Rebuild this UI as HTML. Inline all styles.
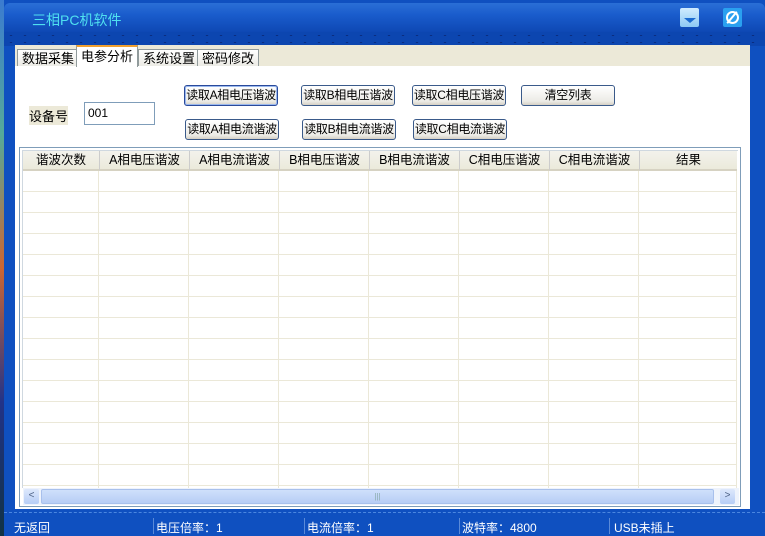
<!DOCTYPE html><html><head><style>
*{margin:0;padding:0;box-sizing:border-box}
body{width:765px;height:536px;overflow:hidden;background:#1a5fb0;font-family:"Liberation Sans","Noto Sans CJK SC",sans-serif;font-size:12px;position:relative}
.abs{position:absolute}
#left{left:0;top:0;width:4px;height:536px;background:linear-gradient(#3b7bd0,#5a9,#c63,#238,#134)}
#win{left:4px;top:0;width:761px;height:536px;background:#0f50c0}
#title{left:4px;top:3px;width:761px;height:29px;background:linear-gradient(#2a6fd6,#1a5ccc 40%,#0e48b4);border-radius:6px 6px 0 0}
#title span{position:absolute;left:28px;top:7px;color:#4fe0f0;font-size:14px;letter-spacing:0}
#dots{left:4px;top:32px;width:761px;height:14px;background:#0c46b0;background-image:radial-gradient(#0a2d80 1px,transparent 1.5px);background-size:14px 7px}
#panel{left:15px;top:45px;width:735px;height:464px;background:#fff}
#tabs{left:15px;top:45px;width:735px;height:21px;background:#ece9d8}
.tab{position:absolute;top:4px;height:17px;border:1px solid #919b9c;border-bottom:none;background:linear-gradient(#fff,#ecebe5);font-size:13px;padding:1px 4px 0;color:#000;line-height:15px;white-space:nowrap}
.btn{position:absolute;height:21px;border:1px solid #3a5a8a;border-radius:3px;background:linear-gradient(#fff,#ecebe6 80%,#d6d0c5);font-size:12px;line-height:19px;text-align:center;color:#000;white-space:nowrap;overflow:hidden;letter-spacing:-0.3px}
#grid{left:19px;top:147px;width:722px;height:360px;border:1px solid #7f9db9;background:#fff}
.hd{position:absolute;top:3px;height:20px;background:linear-gradient(#f3f2ec,#ebeadb);border-bottom:2px solid #d6d2c2;font-size:12.5px;line-height:18px;text-align:center;white-space:nowrap}
#status{left:4px;top:512px;width:761px;height:24px;background:#0f50c0;border-top:1px dashed #4a86e0}
#status span{position:absolute;top:6px;color:#fff;font-size:12px}
.sep{position:absolute;top:5px;width:1px;height:16px;background:#5a8ad8}
</style></head><body>
<div class="abs" id="left"></div>
<div class="abs" id="win"></div>
<div class="abs" id="title"><span>三相PC机软件</span>
<div style="position:absolute;left:676px;top:5px;width:19px;height:19px;background:linear-gradient(#d0ecff,#8cc8f4);border-radius:2px"><div style="position:absolute;left:4px;top:10px;border-left:6px solid transparent;border-right:6px solid transparent;border-top:5px solid #1a6ad0"></div></div>
<div style="position:absolute;left:719px;top:5px;width:19px;height:19px;background:#2aa0f0;border-radius:2px"><div style="position:absolute;left:3px;top:3px;width:13px;height:13px;border:2px solid #fff;border-radius:50%"></div><div style="position:absolute;left:8px;top:2px;width:2px;height:15px;background:#fff;transform:rotate(40deg)"></div></div>
</div>
<div class="abs" id="dots"></div>
<div class="abs" id="panel"></div>
<div class="abs" id="tabs">
<div class="tab" style="left:2px">数据采集</div>
<div class="tab" style="left:61px;top:0;height:22px;background:#fff;border-top:2px solid #f0a030;padding-top:2px">电参分析</div>
<div class="tab" style="left:123px">系统设置</div>
<div class="tab" style="left:182px">密码修改</div>
</div>
<div class="abs" style="left:29px;top:106px;font-size:13px;background:#ece9d8">设备号</div>
<div class="abs" style="left:84px;top:102px;width:71px;height:23px;border:1px solid #7f9db9;background:#fff;padding:3px 3px;font-size:12px">001</div>
<div class="btn" style="left:184px;top:85px;width:94px;border-color:#2a4a9a;box-shadow:inset 0 0 0 1px #9ab8ee">读取A相电压谐波</div>
<div class="btn" style="left:301px;top:85px;width:94px">读取B相电压谐波</div>
<div class="btn" style="left:412px;top:85px;width:94px">读取C相电压谐波</div>
<div class="btn" style="left:521px;top:85px;width:94px">清空列表</div>
<div class="btn" style="left:185px;top:119px;width:94px">读取A相电流谐波</div>
<div class="btn" style="left:302px;top:119px;width:94px">读取B相电流谐波</div>
<div class="btn" style="left:413px;top:119px;width:94px">读取C相电流谐波</div>
<div class="abs" id="grid">
<svg width="722" height="360" style="position:absolute;left:0;top:0">
<g stroke="#ebe8d8" stroke-width="1">
<line x1="3" x2="717" y1="43.5" y2="43.5"/><line x1="3" x2="717" y1="64.5" y2="64.5"/><line x1="3" x2="717" y1="85.5" y2="85.5"/><line x1="3" x2="717" y1="106.5" y2="106.5"/><line x1="3" x2="717" y1="127.5" y2="127.5"/><line x1="3" x2="717" y1="148.5" y2="148.5"/><line x1="3" x2="717" y1="169.5" y2="169.5"/><line x1="3" x2="717" y1="190.5" y2="190.5"/><line x1="3" x2="717" y1="211.5" y2="211.5"/><line x1="3" x2="717" y1="232.5" y2="232.5"/><line x1="3" x2="717" y1="253.5" y2="253.5"/><line x1="3" x2="717" y1="274.5" y2="274.5"/><line x1="3" x2="717" y1="295.5" y2="295.5"/><line x1="3" x2="717" y1="316.5" y2="316.5"/><line x1="3" x2="717" y1="337.5" y2="337.5"/>
<line x1="78.5" x2="78.5" y1="22" y2="340"/><line x1="168.5" x2="168.5" y1="22" y2="340"/><line x1="258.5" x2="258.5" y1="22" y2="340"/><line x1="348.5" x2="348.5" y1="22" y2="340"/><line x1="438.5" x2="438.5" y1="22" y2="340"/><line x1="528.5" x2="528.5" y1="22" y2="340"/><line x1="618.5" x2="618.5" y1="22" y2="340"/><line x1="716.5" x2="716.5" y1="3" y2="340"/>
</g></svg>
<div style="position:absolute;left:2px;top:2px;width:716px;height:338px;border:1px solid #cfd8e0;border-right:none;border-bottom:none"></div>
<div class="hd" style="left:3px;width:76px">谐波次数</div>
<div class="hd" style="left:79px;width:90px;border-left:1px solid #ccc">A相电压谐波</div>
<div class="hd" style="left:169px;width:90px;border-left:1px solid #ccc">A相电流谐波</div>
<div class="hd" style="left:259px;width:90px;border-left:1px solid #ccc">B相电压谐波</div>
<div class="hd" style="left:349px;width:90px;border-left:1px solid #ccc">B相电流谐波</div>
<div class="hd" style="left:439px;width:90px;border-left:1px solid #ccc">C相电压谐波</div>
<div class="hd" style="left:529px;width:90px;border-left:1px solid #ccc">C相电流谐波</div>
<div class="hd" style="left:619px;width:98px;border-left:1px solid #ccc">结果</div>
<div style="position:absolute;left:3px;top:340px;width:716px;height:17px;background:#eef3fc">
<div style="position:absolute;left:1px;top:1px;width:15px;height:15px;background:linear-gradient(#dde8fc,#b6cdf6);border-radius:2px;color:#4d6185;font-size:10px;line-height:14px;text-align:center">&lt;</div>
<div style="position:absolute;left:18px;top:1px;width:673px;height:15px;background:linear-gradient(#cfe0fb,#b7cdf5);border:1px solid #a8c0ec;border-radius:2px;color:#8aa;font-size:8px;text-align:center;line-height:13px">|||</div>
<div style="position:absolute;left:697px;top:1px;width:15px;height:15px;background:linear-gradient(#dde8fc,#b6cdf6);border-radius:2px;color:#4d6185;font-size:10px;line-height:14px;text-align:center">&gt;</div>
</div>
</div>
<div class="abs" id="status">
<span style="left:10px">无返回</span>
<div class="sep" style="left:149px"></div><span style="left:152px">电压倍率：1</span>
<div class="sep" style="left:300px"></div><span style="left:303px">电流倍率：1</span>
<div class="sep" style="left:455px"></div><span style="left:458px">波特率：4800</span>
<div class="sep" style="left:605px"></div><span style="left:610px">USB未插上</span>
</div>
</body></html>
